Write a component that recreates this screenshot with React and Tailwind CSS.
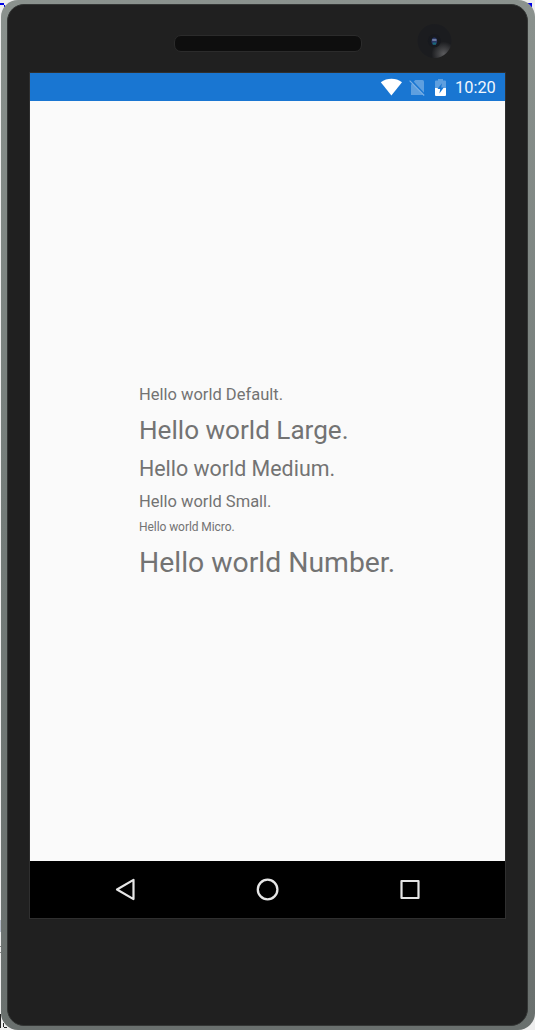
import React from 'react';

function StatusBar() {
  return (
    <div className="flex h-7 shrink-0 items-center bg-[#1976d2] pl-[350px]">
      <svg className="h-7 w-[75px] shrink-0" viewBox="380 73 75 28">
        <path d="M380.8 82.2C387 77.6 396 77.6 402 82.2L391.4 95.4Z" fill="#fff" />
        <path d="M411 84.6L415.3 80H422.5Q424 80 424 81.5V95H411Z" fill="#5e9fdf" />
        <path d="M410.6 79.8L425 95.2" stroke="#1976d2" strokeWidth="2" />
        <path d="M409.6 80.7L424.2 95.5" stroke="#7bb0e5" strokeWidth="1.2" />
        <path d="M435 88.5V81.2Q435 80.5 436 80.5H438V79H443V80.5H445Q446 80.5 446 81.2V88.5Z" fill="#5e9fdf" />
        <path d="M435 88H446V95Q446 96 445 96H436Q435 96 435 95Z" fill="#fff" />
        <path d="M442 83.2L437.4 88.9H440.2L439.4 93.4L443.8 87.6H441.2Z" fill="#1976d2" />
      </svg>
      <span className="mt-0.5 text-[16.4px] leading-7 text-[#f2f7fd]">10:20</span>
    </div>
  );
}

function NavigationBar() {
  return (
    <div className="flex h-[57px] shrink-0 items-center justify-between bg-black px-[83px]">
      <svg className="size-6" viewBox="0 0 24 24" fill="none" stroke="#e6e6e6" strokeWidth="2.2" strokeLinejoin="round">
        <path d="M20.5 1.9V21.1L4 11.5Z" />
      </svg>
      <svg className="size-6" viewBox="0 0 24 24" fill="none" stroke="#e6e6e6" strokeWidth="2.3">
        <circle cx="11.6" cy="11.5" r="9.8" />
      </svg>
      <svg className="size-6" viewBox="0 0 24 24" fill="none" stroke="#e6e6e6" strokeWidth="2.2" strokeLinejoin="round">
        <rect x="3.5" y="3" width="17" height="17" />
      </svg>
    </div>
  );
}

function Camera() {
  return (
    <svg className="size-9" viewBox="0 0 36 36">
      <defs>
        <radialGradient id="glare" cx="0.77" cy="0.88" r="0.36">
          <stop offset="0" stopColor="#5b5b5d" />
          <stop offset="1" stopColor="#1b1c1f" />
        </radialGradient>
      </defs>
      <circle cx="17.5" cy="18" r="17" fill="url(#glare)" />
      <circle cx="17.3" cy="17.8" r="6.5" fill="#17191e" />
      <ellipse cx="17.3" cy="18.2" rx="2.8" ry="3.8" fill="#283765" />
      <path d="M15.2 16.1H19.5V17.9H15.2Z" fill="#7480a6" />
      <path d="M15.8 19.6H19V21.6H15.8Z" fill="#176b78" />
    </svg>
  );
}

export default function App() {
  return (
    <div className="relative h-[1030px] w-[535px] overflow-hidden bg-[#eeeeee] pl-px font-['Roboto',sans-serif]">
      <svg className="absolute left-0 top-0 h-[1030px] w-[535px]" viewBox="0 0 535 1030">
        <path d="M0 3H4V5H0ZM4 5H5V7H4ZM527 3H532V7H530V5H527Z" fill="#0000e6" />
        <path d="M0 920H1V932H0Z" fill="#b9bfcc" />
        <path d="M0 946H1V947H0ZM0 952H1V953H0Z" fill="#858585" />
        <path d="M0 1014H1V1028H0ZM3 1023H4V1027H7V1028H4V1027H3Z" fill="#222" />
      </svg>
      <div className="relative h-[1030px] w-[534px] rounded-[17px] bg-linear-to-b from-[#8b928e] via-[#747c79] to-[#6a706e] pb-1 pl-[6px] pr-[7px] pt-1">
        <div className="flex h-[1022px] flex-col rounded-[17px] border border-[#343635] bg-[#202020] px-[21px]">
          <div className="flex h-[67px] shrink-0 items-start pl-[145px]">
            <div className="mt-[30px] h-[17px] w-[188px] rounded-[7px] border border-[#2b2b2b] bg-[#0e0e0e]" />
            <div className="ml-[55px] mt-[18px]">
              <Camera />
            </div>
          </div>
          <div className="flex h-[847px] w-[477px] shrink-0 flex-col border border-[#2f2f2f]">
            <StatusBar />
            <main className="h-[760px] shrink-0 bg-[#fafafa] pl-[109px] pt-[283px] text-[#737373]">
              <p className="text-[16.5px] leading-[22px]">Hello world Default.</p>
              <p className="mt-[7px] text-[26.1px] leading-[34px]">Hello world Large.</p>
              <p className="mt-2 text-[21.4px] leading-7">Hello world Medium.</p>
              <p className="mt-2 text-[16.5px] leading-[22px]">Hello world Small.</p>
              <p className="mt-1.5 text-[12px] leading-4 tracking-[-0.07px]">Hello world Micro.</p>
              <p className="mt-[9px] text-[28.35px] leading-[38px]">Hello world Number.</p>
            </main>
            <NavigationBar />
          </div>
        </div>
      </div>
    </div>
  );
}
